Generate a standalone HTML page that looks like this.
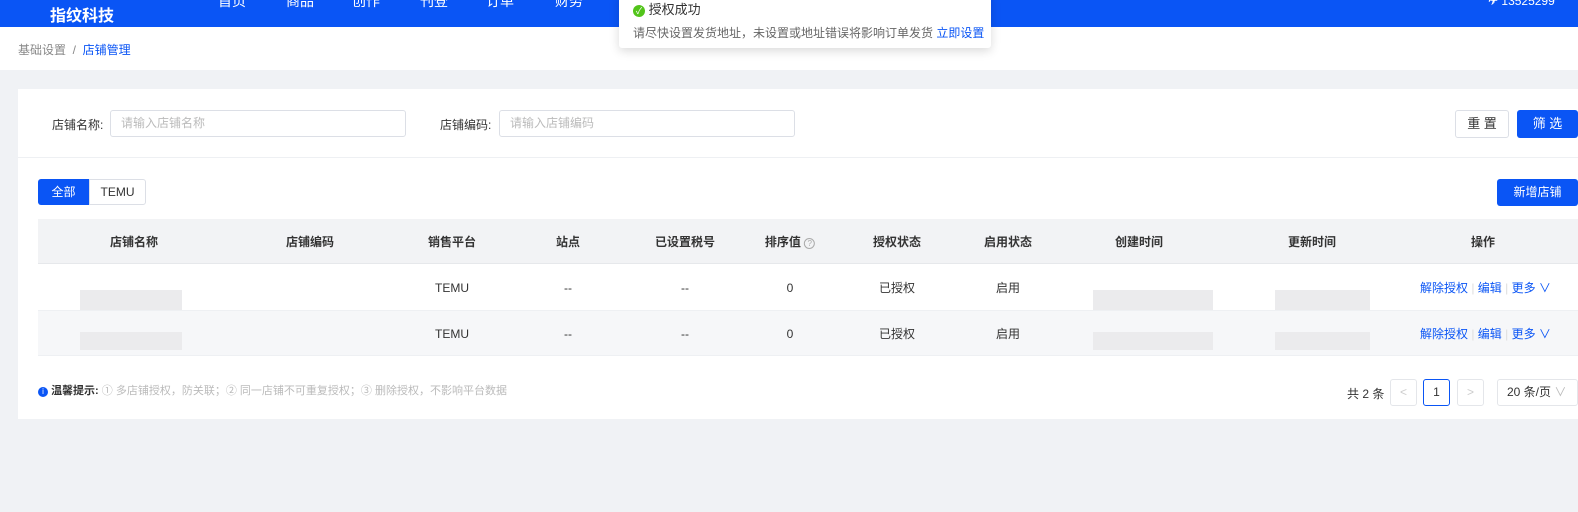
<!DOCTYPE html><html><head><meta charset="utf-8"><style>
*{margin:0;padding:0;box-sizing:border-box}
body{width:1578px;height:512px;background:#f0f2f5;font-family:"Liberation Sans","Noto Sans CJK SC",sans-serif;font-size:12px;color:#333;position:relative;overflow:hidden}
.a{position:absolute}
.hdr{left:0;top:0;width:1578px;height:27px;background:#0a55f5}
.bc{left:0;top:27px;width:1578px;height:43px;background:#fff}
.card{left:18px;top:89px;width:1570px;height:330px;background:#fff}
.inp{height:27px;border:1px solid #dcdfe6;border-radius:3px;color:#bbb;padding-left:10px;line-height:25px}
.th{top:219px;height:45px;background:#f2f3f5;left:38px;width:1540px;border-bottom:1px solid #e6e8eb}
.c{position:absolute;transform:translateX(-50%);white-space:nowrap;display:block;line-height:16px;top:0}
.blur{background:#ebebed}
.btn{border-radius:3px;text-align:center;font-size:13px}
.nav{top:-9px;color:#fff;font-size:14px}
</style></head><body>
<div class="a hdr"></div>
<div class="a nav" style="left:218px">首页</div><div class="a nav" style="left:286px">商品</div><div class="a nav" style="left:352px">创作</div><div class="a nav" style="left:420px">刊登</div><div class="a nav" style="left:486px">订单</div><div class="a nav" style="left:555px">财务</div>
<div class="a" style="left:50px;top:2px;color:#fff;font-size:16px;font-weight:bold">指纹科技</div>
<div class="a" style="left:1488px;top:-6px;color:#fff;font-size:12px">✈ 13525299</div>
<div class="a bc"></div>
<div class="a" style="left:18px;top:41px;color:#888">基础设置 &nbsp;/&nbsp; <span style="color:#0a55f5">店铺管理</span></div>
<div class="a card"></div>
<div class="a" style="left:52px;top:116px">店铺名称:</div>
<div class="a inp" style="left:110px;top:110px;width:296px">请输入店铺名称</div>
<div class="a" style="left:440px;top:116px">店铺编码:</div>
<div class="a inp" style="left:499px;top:110px;width:296px">请输入店铺编码</div>
<div class="a btn" style="left:1455px;top:110px;width:54px;height:28px;border:1px solid #dcdfe6;line-height:26px">重 置</div>
<div class="a btn" style="left:1517px;top:110px;width:61px;height:28px;background:#0a55f5;color:#fff;line-height:28px">筛 选</div>
<div class="a" style="left:18px;top:157px;width:1560px;height:1px;background:#eef0f3"></div>
<div class="a" style="left:38px;top:179px;width:51px;height:26px;background:#0a55f5;color:#fff;line-height:26px;text-align:center;border-radius:3px 0 0 3px">全部</div>
<div class="a" style="left:89px;top:179px;width:57px;height:26px;border:1px solid #dcdfe6;line-height:24px;text-align:center;border-radius:0 3px 3px 0">TEMU</div>
<div class="a btn" style="left:1497px;top:179px;width:81px;height:27px;background:#0a55f5;color:#fff;line-height:27px;font-size:12px">新增店铺</div>
<div class="a th"></div>
<div class="a" style="left:38px;top:310px;width:1540px;height:46px;background:#f6f7f9;border-top:1px solid #eef0f3;border-bottom:1px solid #eef0f3"></div>
<div class="a" style="top:234px;left:0;width:1578px;font-weight:bold;color:#333">
<span class="c" style="left:134px">店铺名称</span><span class="c" style="left:310px">店铺编码</span><span class="c" style="left:452px">销售平台</span><span class="c" style="left:568px">站点</span><span class="c" style="left:685px">已设置税号</span><span class="c" style="left:790px">排序值 <span style="font-weight:normal;color:#aaa;border:1px solid #aaa;border-radius:50%;display:inline-block;width:11px;height:11px;font-size:8px;line-height:10px;text-align:center">?</span></span><span class="c" style="left:897px">授权状态</span><span class="c" style="left:1008px">启用状态</span><span class="c" style="left:1139px">创建时间</span><span class="c" style="left:1312px">更新时间</span><span class="c" style="left:1483px">操作</span></div>
<div class="a" style="top:280px;left:0;width:1578px">
<span class="c" style="left:452px">TEMU</span><span class="c" style="left:568px">--</span><span class="c" style="left:685px">--</span><span class="c" style="left:790px">0</span><span class="c" style="left:897px">已授权</span><span class="c" style="left:1008px">启用</span></div>
<div class="a" style="top:326px;left:0;width:1578px">
<span class="c" style="left:452px">TEMU</span><span class="c" style="left:568px">--</span><span class="c" style="left:685px">--</span><span class="c" style="left:790px">0</span><span class="c" style="left:897px">已授权</span><span class="c" style="left:1008px">启用</span></div>
<div class="a" style="left:1420px;top:280px;color:#0a55f5;line-height:16px">解除授权 <span style="color:#ddd">|</span> 编辑 <span style="color:#ddd">|</span> 更多 ∨</div>
<div class="a" style="left:1420px;top:326px;color:#0a55f5;line-height:16px">解除授权 <span style="color:#ddd">|</span> 编辑 <span style="color:#ddd">|</span> 更多 ∨</div>
<div class="a blur" style="left:80px;top:290px;width:102px;height:20px"></div>
<div class="a blur" style="left:80px;top:332px;width:102px;height:18px"></div>
<div class="a blur" style="left:1093px;top:290px;width:120px;height:20px"></div>
<div class="a blur" style="left:1275px;top:290px;width:95px;height:20px"></div>
<div class="a blur" style="left:1093px;top:332px;width:120px;height:18px"></div>
<div class="a blur" style="left:1275px;top:332px;width:95px;height:18px"></div>
<div class="a" style="left:38px;top:382px;font-size:11px;color:#bbb"><span style="display:inline-block;width:10px;height:10px;border-radius:50%;background:#0a55f5;color:#fff;font-size:8px;text-align:center;line-height:10px">i</span> <b style="color:#333">温馨提示:</b> ① 多店铺授权，防关联；② 同一店铺不可重复授权；③ 删除授权，不影响平台数据</div>
<div class="a" style="left:1347px;top:385px">共 2 条</div>
<div class="a" style="left:1390px;top:379px;width:27px;height:27px;border:1px solid #e4e6ea;border-radius:3px;color:#ccc;text-align:center;line-height:25px">&lt;</div>
<div class="a" style="left:1423px;top:379px;width:27px;height:27px;border:1px solid #0a55f5;border-radius:3px;text-align:center;line-height:25px">1</div>
<div class="a" style="left:1457px;top:379px;width:27px;height:27px;border:1px solid #e4e6ea;border-radius:3px;color:#ccc;text-align:center;line-height:25px">&gt;</div>
<div class="a" style="left:1497px;top:379px;width:81px;height:27px;border:1px solid #e4e6ea;border-radius:3px;line-height:25px;padding-left:9px">20 条/页 <span style="color:#bbb">∨</span></div>
<div class="a" style="left:619px;top:-8px;width:372px;height:56px;background:#fff;box-shadow:0 3px 10px rgba(0,0,0,.15);border-radius:3px"></div>
<div class="a" style="left:633px;top:-1px;font-size:13px;color:#333"><span style="display:inline-block;width:12px;height:12px;border-radius:50%;background:#52c41a;color:#fff;font-size:9px;text-align:center;line-height:12px">✓</span> 授权成功</div>
<div class="a" style="left:633px;top:24px;color:#666">请尽快设置发货地址，未设置或地址错误将影响订单发货 <span style="color:#0a55f5">立即设置</span></div>
</body></html>
